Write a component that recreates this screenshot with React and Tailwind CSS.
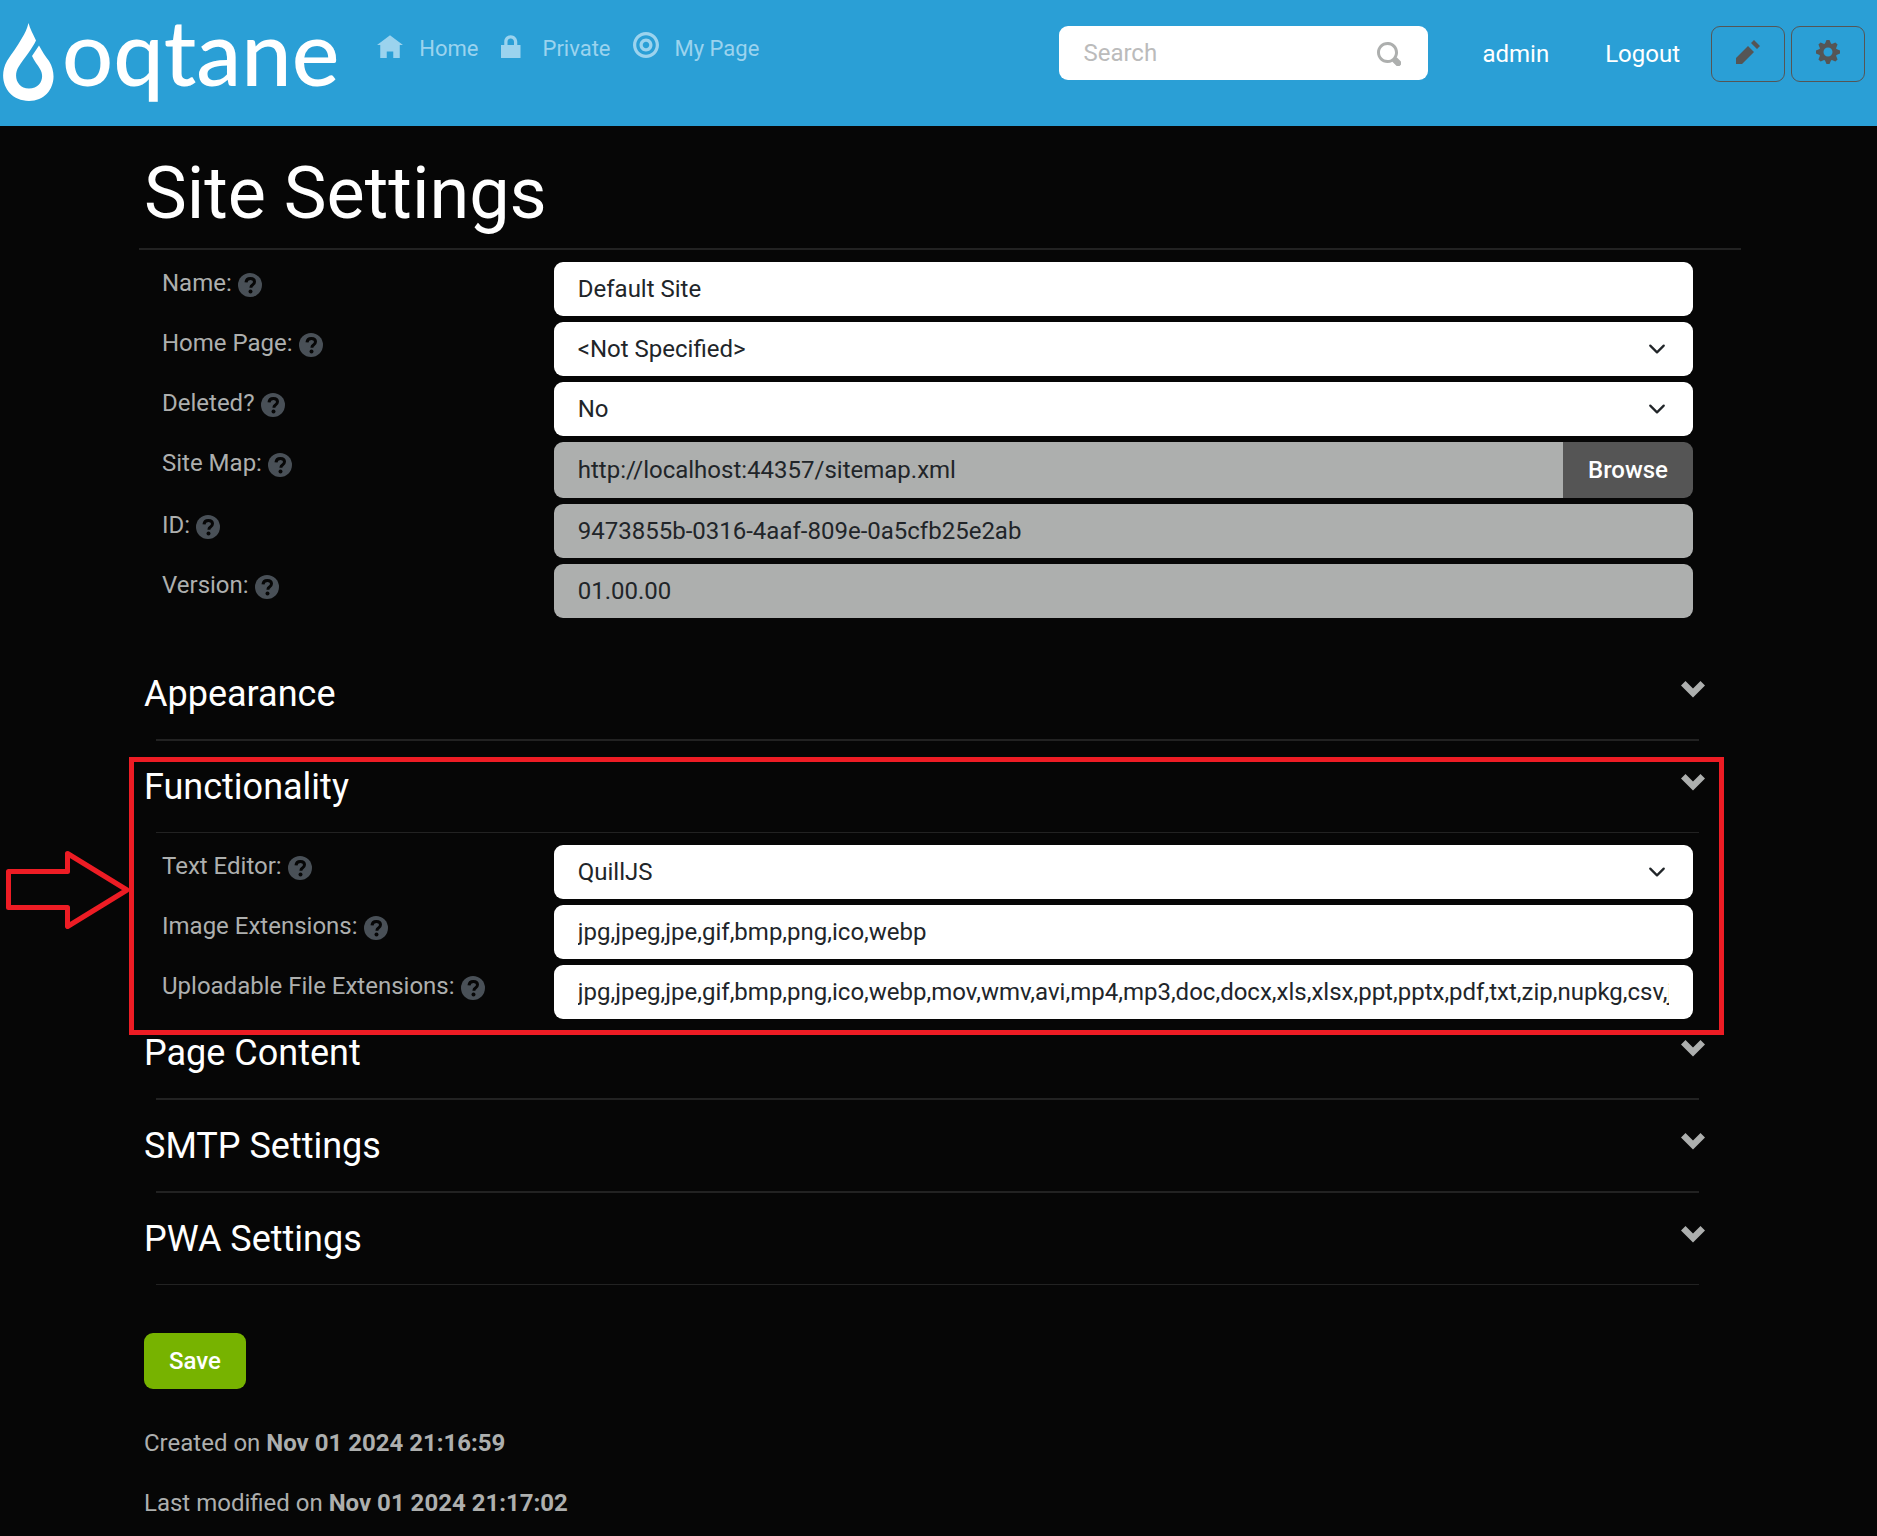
const ICONS = {
  home: 'M4 1l-4 3h1v4h2v-2h2v2h2v-4.03l1 .03-4-3z',
  lock: 'M3 1c-1.1 0-2 .9-2 2v1h-1v4h6v-4h-1v-1c0-1.1-.9-2-2-2zm0 1c.56 0 1 .44 1 1v1h-2v-1c0-.56.44-1 1-1z',
  target:
    'M4 0c-2.2 0-4 1.8-4 4s1.8 4 4 4 4-1.8 4-4-1.8-4-4-4zm0 1c1.66 0 3 1.34 3 3s-1.34 3-3 3-3-1.34-3-3 1.34-3 3-3zm0 1c-1.1 0-2 .9-2 2s.9 2 2 2 2-.9 2-2-.9-2-2-2zm0 1c.56 0 1 .44 1 1s-.44 1-1 1-1-.44-1-1 .44-1 1-1z',
  search:
    'M3.5 0c-1.93 0-3.5 1.57-3.5 3.5s1.57 3.5 3.5 3.5c.59 0 1.17-.14 1.66-.41a1 1 0 0 0 .13.13l1 1a1.02 1.02 0 1 0 1.44-1.44l-1-1a1 1 0 0 0-.16-.13c.27-.49.44-1.06.44-1.66 0-1.93-1.55-3.5-3.5-3.5zm0 1c1.39 0 2.5 1.11 2.5 2.5 0 .66-.24 1.27-.66 1.72l-.03.03a1 1 0 0 0-.13.13c-.44.4-1.04.63-1.69.63-1.39 0-2.5-1.11-2.5-2.5s1.11-2.5 2.5-2.5z',
  pencil: 'M6 0l-1 1 2 2 1-1-2-2zm-2 2l-4 4v2h2l4-4-2-2z',
  cog: 'M3.5 0l-.5 1.19c-.1.03-.19.08-.28.13l-1.19-.5-.72.72.5 1.19c-.05.1-.09.18-.13.28l-1.19.5v1l1.19.5c.04.1.08.18.13.28l-.5 1.19.72.72 1.19-.5c.09.04.18.09.28.13l.5 1.19h1l.5-1.19c.09-.04.19-.08.28-.13l1.19.5.72-.72-.5-1.19c.04-.09.09-.19.13-.28l1.19-.5v-1l-1.19-.5c-.03-.09-.08-.19-.13-.28l.5-1.19-.72-.72-1.19.5c-.09-.04-.19-.09-.28-.13l-.5-1.19h-1zm.5 2.5c.83 0 1.5.67 1.5 1.5s-.67 1.5-1.5 1.5-1.5-.67-1.5-1.5.67-1.5 1.5-1.5z',
  chevron: 'M1.5 1l-1.5 1.5 4 4 4-4-1.5-1.5-2.5 2.5-2.5-2.5z',
}

const NAV = [
  { label: 'Home', icon: 'home' },
  { label: 'Private', icon: 'lock' },
  { label: 'My Page', icon: 'target' },
]

function Icon({ name, className }) {
  return (
    <svg viewBox="0 0 8 8" fill="currentColor" className={className} aria-hidden="true">
      <path d={ICONS[name]} />
    </svg>
  )
}

function HelpIcon() {
  return (
    <svg viewBox="0 0 24 24" className="w-6 h-6 flex-shrink-0 text-[#495057]" aria-hidden="true">
      <circle cx="12" cy="12" r="12" fill="currentColor" />
      <path
        d="M8 9.300c.2-2.500 1.900-3.900 4.300-3.900 2.500 0 4.200 1.400 4.200 3.400 0 1.500-.9 2.400-2 3.100-1 .7-1.500 1.200-1.500 2.200v.6"
        fill="none"
        stroke="#060606"
        strokeWidth="3"
      />
      <circle cx="12.500" cy="18.500" r="2" fill="#060606" />
    </svg>
  )
}

function Logo() {
  return (
    <a href="#" className="flex items-start text-white">
      <svg viewBox="0 0 52 79" className="w-[52px] h-[79px] mt-[23px] ml-[3px]" aria-hidden="true">
        <path
          fill="currentColor"
          d="M25.500 0C27 6 30 11 33 17.500C29 26 22 34 15.500 44C10 53 14 65.500 26 65.500C38 65.500 42 54 37 46C35 42 31 38 29 33L36 22.500C39 28 42 33 46 38C57 56 47 78 26 78C4 78-6 56 4 38C9 30 14 24 19 15C22 10 24 6 25.500 0z"
        />
      </svg>
      <span className="font-['Lato',sans-serif] font-medium text-[90px] leading-[90px] pt-1.5 pl-[7px]">oqtane</span>
    </a>
  )
}

function Header() {
  return (
    <header className="flex items-start justify-between h-[126px] bg-[#2a9fd6]">
      <div className="flex items-start">
        <Logo />
        <nav className="flex gap-[22px] pt-[31px] pl-[38px] text-[22px]">
          {NAV.map((item) => (
            <a key={item.label} href="#" className="flex gap-4 text-[#9bd3ee]">
              <Icon name={item.icon} className="w-[26px] h-[26px] mt-px" />
              {item.label}
            </a>
          ))}
        </nav>
      </div>
      <div className="flex items-start pt-[26px] pr-3">
        <div className="relative">
          <input
            type="search"
            aria-label="Search"
            placeholder="Search"
            className="w-[369px] h-[54px] px-6 rounded-[9px] bg-white text-[#212529] placeholder:text-[#bbbbbb]"
          />
          <button aria-label="Search" className="absolute right-[27px] top-4 text-[#adafae]">
            <Icon name="search" className="w-6 h-6" />
          </button>
        </div>
        <a href="#" className="pl-[54px] pt-[10px] text-white">admin</a>
        <a href="#" className="pl-14 pr-[31px] pt-[10px] text-white">Logout</a>
        <div className="flex gap-1.5">
          <button aria-label="Edit" className="flex justify-center w-[74px] h-14 pt-[13px] rounded-[9px] border border-[#555555] text-[#555555]">
            <Icon name="pencil" className="w-6 h-6" />
          </button>
          <button aria-label="Settings" className="flex justify-center w-[74px] h-14 pt-[13px] rounded-[9px] border border-[#555555] text-[#555555]">
            <Icon name="cog" className="w-6 h-6" />
          </button>
        </div>
      </div>
    </header>
  )
}

function Row({ id, label, children }) {
  return (
    <div className="grid grid-cols-4">
      <label htmlFor={id} className="flex items-start gap-1.5 pl-[18px] pt-[3px]">
        {label}
        <span className="pt-2">
          <HelpIcon />
        </span>
      </label>
      <div className="col-span-3 px-[18px]">{children}</div>
    </div>
  )
}

function TextRow({ id, label, value, disabled }) {
  return (
    <Row id={id} label={label}>
      <input
        id={id}
        defaultValue={value}
        disabled={disabled}
        className="block w-full h-[54px] px-6 rounded-[9px] bg-white text-[#212529] disabled:bg-[#adafae]"
      />
    </Row>
  )
}

function SelectRow({ id, label, value }) {
  return (
    <Row id={id} label={label}>
      <div className="relative">
        <select
          id={id}
          defaultValue={value}
          className="block w-full h-[54px] px-6 rounded-[9px] bg-white text-[#212529] appearance-none"
        >
          <option>{value}</option>
        </select>
        <svg
          viewBox="0 0 16 16"
          className="absolute right-[27px] top-[18px] w-[18px] h-[18px] pointer-events-none"
          aria-hidden="true"
        >
          <path d="m2 5 6 6 6-6" fill="none" stroke="#212529" strokeWidth="2" strokeLinecap="round" strokeLinejoin="round" />
        </svg>
      </div>
    </Row>
  )
}

function SectionHeading({ title, thin }) {
  return (
    <div>
      <div className="flex items-start justify-between pb-[23px] pr-1.5">
        <h2 className="text-4xl leading-11 text-white">{title}</h2>
        <button aria-label={`Toggle ${title}`} className="mt-1.5 text-[#adafae]">
          <Icon name="chevron" className="w-6 h-6" />
        </button>
      </div>
      <hr className={thin ? 'mx-3 h-px border-0 bg-[#222222]' : 'mx-3 h-0.5 border-0 bg-[#222222]'} />
    </div>
  )
}

// Red frame and arrow that point out the section they sit in
function Callout() {
  return (
    <div className="absolute -top-2 -bottom-4 -left-[15px] -right-[13px] border-5 border-[#ed1c24] pointer-events-none">
      <svg viewBox="0 0 124 78" className="absolute -left-32 top-[89px] w-[124px] h-[78px]" aria-hidden="true">
        <path
          d="M2.500 20.500H61.500V2.500L121 39L61.500 75.500V56.500H2.500z"
          fill="none"
          stroke="#ed1c24"
          strokeWidth="5"
          strokeLinejoin="round"
        />
      </svg>
    </div>
  )
}

export default function App() {
  return (
    <div className="min-h-screen bg-[#060606] text-[#adafae] font-['Roboto',sans-serif] text-2xl leading-9">
      <Header />
      <main className="ml-[139px] mr-[136px] pt-[25px]">
        <h1 className="pl-[5px] pb-[11px] border-b-2 border-[#222222] text-7xl leading-[86px] text-white">Site Settings</h1>

        <div className="ml-[5px] mr-[30px]">
          <div className="flex flex-col gap-1.5 pt-3">
            <TextRow id="name" label="Name:" value="Default Site" />
            <SelectRow id="home-page" label="Home Page:" value="<Not Specified>" />
            <SelectRow id="deleted" label="Deleted?" value="No" />
            <Row id="site-map" label="Site Map:">
              <div className="flex h-14">
                <input
                  id="site-map"
                  defaultValue="http://localhost:44357/sitemap.xml"
                  disabled
                  className="flex-1 min-w-0 px-6 rounded-l-[9px] bg-[#adafae] text-[#212529]"
                />
                <button className="w-[130px] rounded-r-[9px] bg-[#555555] font-medium text-white">Browse</button>
              </div>
            </Row>
            <TextRow id="site-id" label="ID:" value="9473855b-0316-4aaf-809e-0a5cfb25e2ab" disabled />
            <TextRow id="version" label="Version:" value="01.00.00" disabled />
          </div>

          <div className="flex flex-col gap-6 pt-[54px]">
            <SectionHeading title="Appearance" />
            <section className="relative">
              <SectionHeading title="Functionality" thin />
              <div className="flex flex-col gap-1.5 pt-3">
                <SelectRow id="text-editor" label="Text Editor:" value="QuillJS" />
                <TextRow id="image-ext" label="Image Extensions:" value="jpg,jpeg,jpe,gif,bmp,png,ico,webp" />
                <TextRow
                  id="file-ext"
                  label="Uploadable File Extensions:"
                  value="jpg,jpeg,jpe,gif,bmp,png,ico,webp,mov,wmv,avi,mp4,mp3,doc,docx,xls,xlsx,ppt,pptx,pdf,txt,zip,nupkg,csv,json,xml,rss,css"
                />
              </div>
              <Callout />
            </section>
          </div>

          <div className="flex flex-col gap-6 pt-3">
            <SectionHeading title="Page Content" />
            <SectionHeading title="SMTP Settings" />
            <SectionHeading title="PWA Settings" thin />
          </div>

          <button className="block mt-12 h-14 px-[25px] rounded-[9px] bg-[#77b300] font-medium text-white">Save</button>

          <div className="flex flex-col gap-6 pt-9">
            <p>
              Created on <strong>Nov 01 2024 21:16:59</strong>
            </p>
            <p>
              Last modified on <strong>Nov 01 2024 21:17:02</strong>
            </p>
          </div>
        </div>
      </main>
    </div>
  )
}
